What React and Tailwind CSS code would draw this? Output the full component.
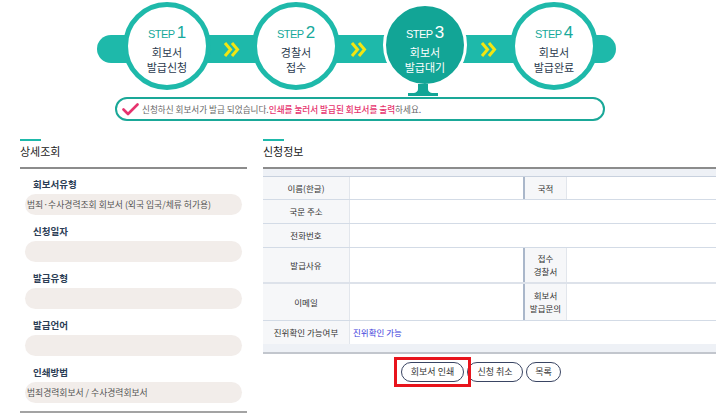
import React from 'react';

const Chevron = () => (
  <svg width="17" height="17" viewBox="0 0 17 17" className="shrink-0">
    <polyline points="2,2 7.5,8.5 2,15" fill="none" stroke="#f2e611" strokeWidth="3" />
    <polyline points="9,2 14.5,8.5 9,15" fill="none" stroke="#f2e611" strokeWidth="3" />
  </svg>
);

const StepCircle = ({ num, lines, active }) => {
  if (active) {
    return (
      <div className="relative w-[84px] h-[84px] -mt-[32px] -mb-[24px] shrink-0 rounded-full border-[3px] border-white bg-[#12a596] flex flex-col items-center pt-[18px]">
        <div className="flex items-baseline h-[17px] leading-[17px] text-white font-['Liberation_Sans',sans-serif]">
          <span className="text-[11px] tracking-[-0.5px]">STEP</span>
          <span className="text-[17px] ml-[2px]">{num}</span>
        </div>
        <div className="mt-[4px] text-[11px] leading-[14.5px] text-white text-center">
          {lines.map((l) => <div key={l}>{l}</div>)}
        </div>
        {/* 말풍선 꼬리 */}
        <svg width="30" height="12" viewBox="0 0 30 12" className="absolute top-full left-1/2 -translate-x-1/2 -ml-[2px]">
          <path d="M10 0 H20 V5 Q20 8 24 9 H30 V12 H0 V9 H6 Q10 8 10 5 Z" fill="#12a596" />
        </svg>
      </div>
    );
  }
  return (
    <div className="w-[88px] h-[88px] -mt-[33px] -mb-[27px] shrink-0 rounded-full border-[5px] border-[#1eb9aa] bg-white flex flex-col items-center pt-[17px]">
      <div className="flex items-baseline h-[17px] leading-[17px] text-[#17a99b] font-['Liberation_Sans',sans-serif]">
        <span className="text-[11px] tracking-[-0.5px]">STEP</span>
        <span className="text-[17px] ml-[2px]">{num}</span>
      </div>
      <div className="mt-[4px] text-[11px] leading-[14.5px] text-[#2b3a4e] text-center">
        {lines.map((l) => <div key={l}>{l}</div>)}
      </div>
    </div>
  );
};

const detailItems = [
  { label: '회보서유형', value: '범죄·수사경력조회 회보서 (외국 입국/체류 허가용)' },
  { label: '신청일자', value: '' },
  { label: '발급유형', value: '' },
  { label: '발급언어', value: '' },
  { label: '인쇄방법', value: '범죄경력회보서 / 수사경력회보서' },
];

const Label = ({ children, className = '' }) => (
  <div className={`bg-[#f6f7f9] flex items-center justify-center text-center text-[8.5px] leading-[13px] text-[#333] ${className}`}>
    {children}
  </div>
);

const App = () => {
  return (
    <div className="w-[716px] h-[419px] overflow-hidden bg-white font-['Noto_Sans_CJK_KR','Noto_Sans',sans-serif]">
      {/* 진행 단계 */}
      <div className="pt-[35px] pl-[97px]">
        <div className="w-[519px] h-[28px] rounded-full bg-[#1eb9aa] flex items-center pl-[26px]">
          <StepCircle num="1" lines={['회보서', '발급신청']} />
          <div className="ml-[12px]"><Chevron /></div>
          <div className="ml-[12px]"><StepCircle num="2" lines={['경찰서', '접수']} /></div>
          <div className="ml-[10px]"><Chevron /></div>
          <div className="ml-[16px]"><StepCircle num="3" lines={['회보서', '발급대기']} active /></div>
          <div className="ml-[13px]"><Chevron /></div>
          <div className="ml-[13px]"><StepCircle num="4" lines={['회보서', '발급완료']} /></div>
        </div>

        <div className="mt-[34px] ml-[18px] w-[490px] h-[24px] rounded-full border-2 border-[#1aa898] flex items-center pl-[5px]">
          <svg width="17" height="13" viewBox="0 0 17 13" className="shrink-0">
            <polyline points="1.5,6.5 6,11 15.5,1.5" fill="none" stroke="#e6336e" strokeWidth="2.6" strokeLinecap="round" strokeLinejoin="round" />
          </svg>
          <p className="ml-[3px] text-[8.6px] leading-[12px] text-[#666] whitespace-nowrap">
            신청하신 회보서가 발급 되었습니다.<span className="text-[#e6336e] font-medium">인쇄를 눌러서 발급된 회보서를 출력</span>하세요.
          </p>
        </div>
      </div>

      <div className="mt-[18px] pl-[20px] flex gap-[16px]">
        {/* 상세조회 */}
        <div className="w-[227px] shrink-0">
          <div className="w-[21px] h-[2px] bg-[#1eb9aa]"></div>
          <h2 className="mt-[3px] h-[14px] text-[11px] leading-[14px] text-[#222]">상세조회</h2>
          <div className="mt-[9px] h-[2px] bg-[#8c8c8c]"></div>
          <div className="pt-[9px] flex flex-col gap-[10px]">
            {detailItems.map((item) => (
              <div key={item.label}>
                <div className="pl-[13px] text-[9.5px] leading-[12px] font-semibold text-[#2b3d55]">{item.label}</div>
                <div className="mt-[4px] mx-[5px] h-[21px] rounded-full bg-[#f2edea] flex items-center px-[2px] text-[8.8px] text-[#555] whitespace-nowrap">
                  {item.value}
                </div>
              </div>
            ))}
          </div>
          <div className="mt-[8px] h-[2px] bg-[#a3a3a3]"></div>
        </div>

        {/* 신청정보 */}
        <div className="flex-1">
          <div className="w-[21px] h-[2px] bg-[#1eb9aa]"></div>
          <h2 className="mt-[3px] h-[14px] text-[11px] leading-[14px] text-[#222]">신청정보</h2>
          <div className="mt-[9px] h-[2px] bg-[#8c8c8c]"></div>
          <div className="h-[8px] bg-[#eef1f6] border-b border-[#c8d1de]"></div>

          <div className="grid grid-cols-[87px_173px_44px_1fr] h-[23px] border-b border-[#d3dbe6]">
            <Label className="border-r border-[#e2e6ec]">이름(한글)</Label>
            <div></div>
            <Label className="border-l-2 border-r border-l-[#aab7ca] border-r-[#e2e6ec]">국적</Label>
            <div></div>
          </div>
          <div className="grid grid-cols-[87px_1fr] h-[24px] border-b border-[#d3dbe6]">
            <Label className="border-r border-[#e2e6ec]">국문 주소</Label>
            <div></div>
          </div>
          <div className="grid grid-cols-[87px_1fr] h-[24px] border-b border-[#d3dbe6]">
            <Label className="border-r border-[#e2e6ec]">전화번호</Label>
            <div></div>
          </div>
          <div className="grid grid-cols-[87px_173px_44px_1fr] h-[36px] border-b-2 border-[#dde2ea]">
            <Label className="border-r border-[#e2e6ec]">발급사유</Label>
            <div></div>
            <Label className="border-l-2 border-r border-l-[#aab7ca] border-r-[#e2e6ec]">접수<br />경찰서</Label>
            <div></div>
          </div>
          <div className="grid grid-cols-[87px_173px_44px_1fr] h-[37px] border-b border-[#d3dbe6]">
            <Label className="border-r border-[#e2e6ec]">이메일</Label>
            <div></div>
            <Label className="border-l-2 border-r border-l-[#aab7ca] border-r-[#e2e6ec]">회보서<br />발급문의</Label>
            <div></div>
          </div>
          <div className="grid grid-cols-[87px_1fr] h-[23px]">
            <Label className="border-r border-[#e2e6ec]">진위확인 가능여부</Label>
            <div className="flex items-center pl-[3px] text-[8.5px] text-[#3d3ddb]">진위확인 가능</div>
          </div>
          <div className="h-[8px] bg-[#eef1f6]"></div>
          <div className="h-[2px] bg-[#c2c6cd]"></div>

          <div className="mt-[8px] pl-[138px] flex gap-[3px]">
            <button className="relative w-[63px] h-[20px] rounded-full border-[1.5px] border-[#3a4563] bg-white text-[9px] text-[#333] flex items-center justify-center">
              회보서 인쇄
              <span className="absolute -left-[8.5px] -top-[6.5px] w-[77px] h-[30px] border-[3px] border-[#e8141c]"></span>
            </button>
            <button className="w-[56px] h-[20px] rounded-full border-[1.5px] border-[#3a4563] bg-white text-[9px] text-[#333] flex items-center justify-center">
              신청 취소
            </button>
            <button className="w-[35px] h-[20px] rounded-full border-[1.5px] border-[#3a4563] bg-white text-[9px] text-[#333] flex items-center justify-center">
              목록
            </button>
          </div>
        </div>
      </div>
    </div>
  );
};

export default App;
